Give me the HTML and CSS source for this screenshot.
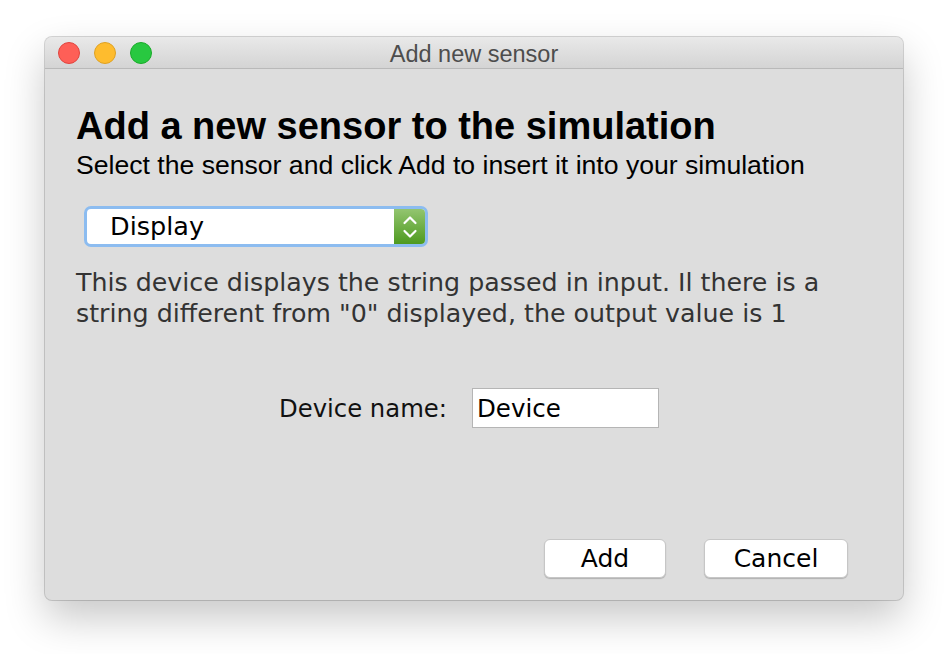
FILE: index.html
```html
<!DOCTYPE html>
<html>
<head>
<meta charset="utf-8">
<link rel="stylesheet" href="styles.css">
</head>
<body>
<div class="page">
  <div class="window">
    <div class="titlebar">
      <div class="lights">
        <span class="light red"></span>
        <span class="light yellow"></span>
        <span class="light green"></span>
      </div>
      <div class="title">Add new sensor</div>
    </div>
    <div class="content">
      <h1 class="heading">Add a new sensor to the simulation</h1>
      <p class="subtitle">Select the sensor and click Add to insert it into your simulation</p>
      <div class="select">
        <span class="select-value">Display</span>
        <span class="stepper">
          <svg width="16" height="30" viewBox="0 0 16 30">
            <path d="M2.5 11 L8 5.5 L13.5 11" fill="none" stroke="#fff" stroke-width="2.2" stroke-linecap="round" stroke-linejoin="round"/>
            <path d="M2.5 19 L8 24.5 L13.5 19" fill="none" stroke="#fff" stroke-width="2.2" stroke-linecap="round" stroke-linejoin="round"/>
          </svg>
        </span>
      </div>
      <p class="desc">This device displays the string passed in input. Il there is a<br>string different from "0" displayed, the output value is 1</p>
      <div class="name-row">
        <label class="name-label">Device name:</label>
        <div class="name-input">Device</div>
      </div>
      <div class="actions">
        <button class="btn btn-add">Add</button>
        <button class="btn btn-cancel">Cancel</button>
      </div>
    </div>
  </div>
</div>
</body>
</html>
```

FILE: styles.css
```css
html, body {
  margin: 0;
  padding: 0;
  background: #ffffff;
}
.page {
  padding: 37px 45px 0 45px;
  height: 654px;
  box-sizing: border-box;
}
.window {
  width: 858px;
  height: 563px;
  box-sizing: border-box;
  background: #dddddd;
  border-radius: 7px;
  box-shadow: 0 0 0 1px rgba(0,0,0,0.16), 0 18px 40px rgba(0,0,0,0.22);
  overflow: hidden;
  display: flex;
  flex-direction: column;
}
.titlebar {
  height: 32px;
  box-sizing: border-box;
  background: linear-gradient(#e9e9e9, #d4d4d4);
  border-bottom: 1px solid #b9b9b9;
  display: flex;
  align-items: center;
  position: relative;
}
.lights {
  display: flex;
  gap: 14px;
  padding-left: 13px;
}
.light {
  width: 22px;
  height: 22px;
  border-radius: 50%;
  box-sizing: border-box;
  display: block;
}
.red { background: #fe5f57; border: 1px solid #e0443e; }
.yellow { background: #febc2e; border: 1px solid #dea123; }
.green { background: #28c840; border: 1px solid #1aab29; }
.title {
  position: absolute;
  left: 0;
  right: 0;
  top: 1px;
  line-height: 32px;
  text-align: center;
  font-family: "Liberation Sans", Arial, sans-serif;
  font-size: 23.5px;
  color: #4d4d4d;
  pointer-events: none;
}
.content {
  flex: 1;
  display: flex;
  flex-direction: column;
  padding: 35px 55px 0 31px;
}
.heading {
  margin: 0;
  font-family: "Liberation Sans", Arial, sans-serif;
  font-weight: bold;
  font-size: 38px;
  line-height: 44px;
  color: #000;
}
.subtitle {
  margin: 2px 0 0 0;
  font-family: "Liberation Sans", Arial, sans-serif;
  font-size: 26.6px;
  line-height: 30px;
  color: #000;
}
.select {
  margin: 26px 0 0 8px;
  width: 344px;
  height: 41px;
  box-sizing: border-box;
  border: 3px solid #8cbcf0;
  border-radius: 7px;
  background: #fff;
  display: flex;
  align-items: stretch;
  overflow: hidden;
}
.select-value {
  flex: 1;
  padding-left: 23px;
  font-family: "DejaVu Sans", sans-serif;
  font-size: 25.5px;
  line-height: 35px;
  color: #000;
}
.stepper {
  width: 31px;
  background: linear-gradient(#93c570, #4e9a1f);
  display: flex;
  align-items: center;
  justify-content: center;
}
.desc {
  margin: 20px 0 0 0;
  font-family: "DejaVu Sans", sans-serif;
  font-size: 25.3px;
  line-height: 31px;
  color: #333;
}
.name-row {
  margin-top: 59px;
  padding-left: 14px;
  display: flex;
  justify-content: center;
  align-items: center;
  gap: 25px;
}
.name-label {
  font-family: "DejaVu Sans", sans-serif;
  font-size: 24.3px;
  color: #111;
}
.name-input {
  width: 187px;
  height: 40px;
  box-sizing: border-box;
  background: #fff;
  border: 1px solid #b5b5b5;
  padding-left: 4px;
  font-family: "DejaVu Sans", sans-serif;
  font-size: 24.5px;
  line-height: 39px;
  color: #000;
}
.actions {
  margin-top: 111px;
  display: flex;
  justify-content: flex-end;
  gap: 38px;
}
.btn {
  height: 39px;
  box-sizing: border-box;
  background: #fff;
  border: 1px solid #c6c6c6;
  border-radius: 6px;
  box-shadow: 0 1px 1px rgba(0,0,0,0.2);
  font-family: "DejaVu Sans", sans-serif;
  font-size: 25px;
  line-height: 37px;
  color: #000;
  padding: 0;
}
.btn-add { width: 122px; }
.btn-cancel { width: 144px; }
```
